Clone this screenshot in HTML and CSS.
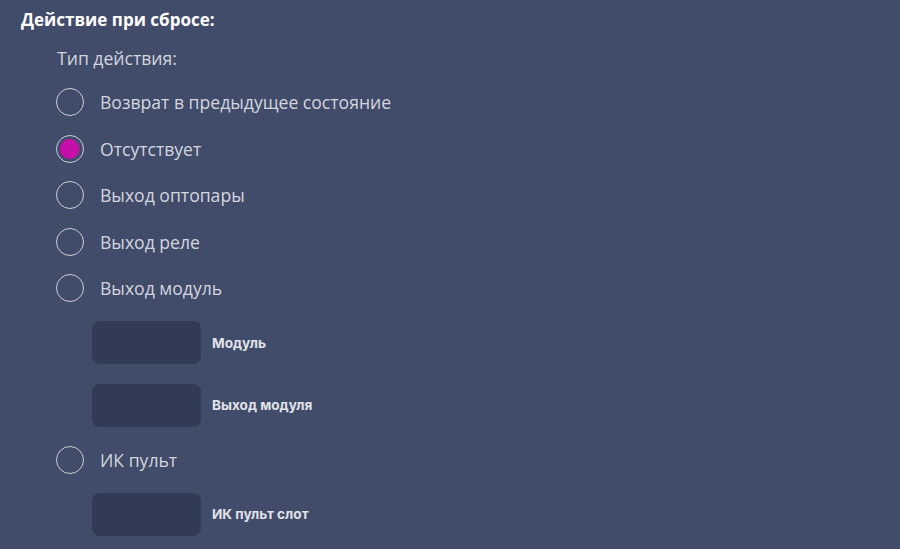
FILE: index.html
```html
<!DOCTYPE html>
<html lang="ru">
<head>
<meta charset="utf-8">
<title>Действие при сбросе</title>
<link rel="stylesheet" href="styles.css">
</head>
<body>
<div class="panel">
  <div class="heading">Действие при сбросе:</div>
  <div class="group">
    <div class="caption">Тип действия:</div>
    <label class="radio"><span class="dot"></span><span class="text">Возврат в предыдущее состояние</span></label>
    <label class="radio checked"><span class="dot"></span><span class="text">Отсутствует</span></label>
    <label class="radio"><span class="dot"></span><span class="text">Выход оптопары</span></label>
    <label class="radio"><span class="dot"></span><span class="text">Выход реле</span></label>
    <label class="radio"><span class="dot"></span><span class="text">Выход модуль</span></label>
    <div class="field"><span class="box"></span><span class="label">Модуль</span></div>
    <div class="field"><span class="box"></span><span class="label">Выход модуля</span></div>
    <label class="radio"><span class="dot"></span><span class="text">ИК пульт</span></label>
    <div class="field"><span class="box"></span><span class="label">ИК пульт слот</span></div>
  </div>
</div>
</body>
</html>
```
FILE: styles.css
```css
html, body {
  margin: 0;
  padding: 0;
  background: #414b6a;
  height: 100%;
  overflow: hidden;
}
.panel {
  padding: 8px 21px;
  font-family: "Open Sans", "Noto Sans", sans-serif;
}
.heading {
  font-size: 17px;
  font-weight: 700;
  line-height: 24px;
  color: #ffffff;
}
.group {
  margin-top: 15px;
  padding-left: 35px;
  display: flex;
  flex-direction: column;
  gap: 19.5px;
}
.caption {
  font-size: 17.6px;
  line-height: 22px;
  color: #d3d6de;
  padding-left: 1px;
}
.radio {
  display: flex;
  align-items: center;
  height: 27px;
}
.dot {
  box-sizing: border-box;
  width: 28px;
  height: 28px;
  border: 1.5px solid #cdd0d8;
  border-radius: 50%;
  flex: none;
  display: flex;
  align-items: center;
  justify-content: center;
}
.checked .dot::after {
  content: "";
  width: 20px;
  height: 20px;
  border-radius: 50%;
  background: #c60fa9;
}
.text {
  margin-left: 16px;
  font-size: 17.6px;
  color: #d3d6de;
}
.field {
  display: flex;
  align-items: center;
  padding-left: 36px;
}
.box {
  width: 109px;
  height: 43px;
  border-radius: 8px;
  background: #323b56;
  flex: none;
}
.label {
  margin-left: 11px;
  font-family: Inter, "Noto Sans", sans-serif;
  font-size: 13.6px;
  font-weight: 700;
  color: #e0e2e8;
}
```
